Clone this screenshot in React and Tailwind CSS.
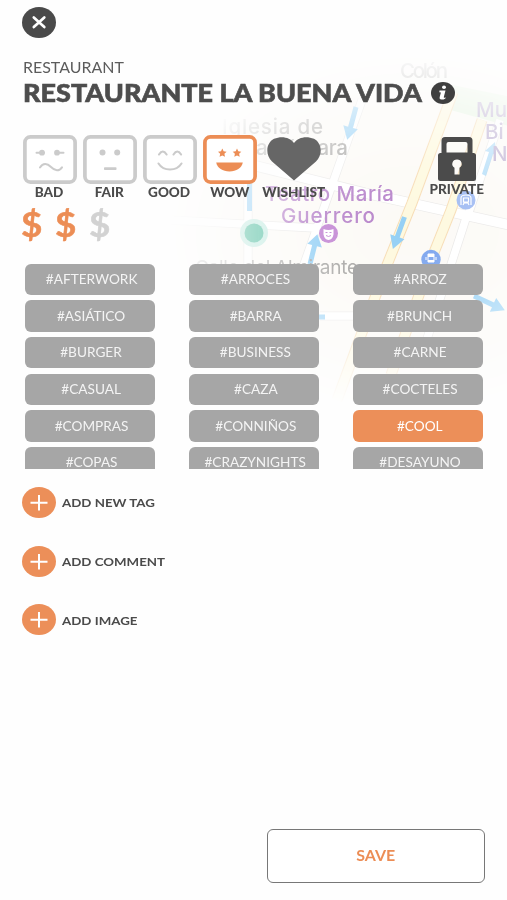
import React from "react";

const moods = [
  { label: "BAD", face: <BadFace /> },
  { label: "FAIR", face: <FairFace /> },
  { label: "GOOD", face: <GoodFace /> },
  { label: "WOW", face: <WowFace />, active: true },
];

const tags = [
  "#AFTERWORK", "#ARROCES", "#ARROZ",
  "#ASIÁTICO", "#BARRA", "#BRUNCH",
  "#BURGER", "#BUSINESS", "#CARNE",
  "#CASUAL", "#CAZA", "#COCTELES",
  "#COMPRAS", "#CONNIÑOS", "#COOL",
  "#COPAS", "#CRAZYNIGHTS", "#DESAYUNO",
];

function BadFace() {
  return (
    <g fill="none" stroke="currentColor" strokeWidth="2" strokeLinecap="round">
      <path d="M13.500 17.700H21M34 17.700h6.500M17 32.500c3-4.500 7-4.500 11-.5s8 4.500 11 0.300" />
      <circle cx="19" cy="17.700" r="1.900" fill="currentColor" />
      <circle cx="34" cy="17.700" r="1.900" fill="currentColor" />
    </g>
  );
}

function FairFace() {
  return (
    <g fill="currentColor">
      <circle cx="19.500" cy="17.500" r="3" />
      <circle cx="34.200" cy="17.500" r="3" />
      <rect x="21" y="32.200" width="12.500" height="2.800" rx="0.800" />
    </g>
  );
}

function GoodFace() {
  return (
    <g fill="none" stroke="currentColor" strokeWidth="2.100" strokeLinecap="round">
      <path d="M16 19.500q3.800-6 7.600 0M30.500 19.500q3.800-6 7.600 0M15.500 28.500c5 8 18 8 23 0" />
    </g>
  );
}

function WowFace() {
  const star = "M0-4.300l1.300 2.700 3 .4-2.200 2.100.6 3L0 2.500l-2.700 1.400.6-3-2.200-2.100 3-.4z";
  return (
    <g fill="currentColor">
      <path d={star} transform="translate(19.300 17.900)" />
      <path d={star} transform="translate(34 17.900)" />
      <path d="M13.200 27.500h26.600c-1 5.500-6.500 9-13.300 9s-12.300-3.500-13.300-9z" />
    </g>
  );
}

function Mood({ label, face, active }) {
  return (
    <div className="flex w-[54px] flex-col items-center">
      <svg viewBox="0 0 54 49" className={active ? "h-[49px] w-[54px] text-[#ec8d55]" : "h-[49px] w-[54px] text-[#cbcbcb]"}>
        <rect x="1.900" y="1.900" width="50.200" height="45.200" rx="5.500" fill="white" stroke="currentColor" strokeWidth="3.700" />
        {face}
      </svg>
      <Label>{label}</Label>
    </div>
  );
}

function Label({ children }) {
  return <span className="mr-px scale-x-110 pt-px text-[12.300px] leading-[15px] font-black whitespace-nowrap text-[#4b4b4b]">{children}</span>;
}

function AddRow({ children }) {
  return (
    <button className="flex h-[31px] items-center gap-[6px]">
      <svg viewBox="0 0 34 31" className="h-[31px] w-[34px]">
        <ellipse cx="17" cy="15.500" rx="17" ry="15.500" fill="#ec8f59" />
        <path d="M8.500 15.800h17M17 8v15.500" stroke="white" strokeWidth="2" />
      </svg>
      <span className="origin-left scale-x-110 pt-[2px] text-[12.100px] font-bold text-[#4b4b4b]">{children}</span>
    </button>
  );
}

function MapBackdrop() {
  const arrow = "M-2.500 0h5v21h5L0 34l-7.500-13h5z";
  return (
    <svg viewBox="0 0 507 480" className="pointer-events-none absolute inset-0 h-[480px] w-[507px]">
      <defs>
        <radialGradient id="fade" gradientUnits="userSpaceOnUse" cx="410" cy="232" r="245" gradientTransform="translate(0 60) scale(1 .74)">
          <stop offset="0" stopColor="white" />
          <stop offset=".35" stopColor="white" stopOpacity=".85" />
          <stop offset=".7" stopColor="white" stopOpacity=".4" />
          <stop offset="1" stopColor="white" stopOpacity="0" />
        </radialGradient>
        <mask id="mapMask">
          <rect width="507" height="480" fill="url(#fade)" />
        </mask>
      </defs>
      <g mask="url(#mapMask)">
        <rect width="507" height="480" fill="#fcfaf6" />
        <path d="M452 85l60 12v30l-65-18z" fill="#e6f5e1" />
        <g fill="none" stroke="#e9e8e7" strokeWidth="9">
          <path d="M170 220l145 8M248 170v100M362 100L302 270M320 316h45M468 212l-42 130M500 120l-32 95" />
          <path d="M240 162l125 31 145 32" strokeWidth="11" />
        </g>
        <g fill="none" stroke="white" strokeWidth="7.500">
          <path d="M170 220l145 8M248 170v100M362 100L302 270M320 316h45M468 212l-42 130M500 120l-32 95" />
          <path d="M240 162l125 31 145 32" strokeWidth="9.500" />
        </g>
        <path d="M453 92L412 203l-25 62-50 135M482 120l-31 90-18 45-42 120" fill="none" stroke="#f7dcb4" strokeWidth="11" />
        <path d="M453 92L412 203l-25 62-50 135M482 120l-31 90-18 45-42 120" fill="none" stroke="#fef9de" strokeWidth="9" />
        <g fill="#93cff5">
          <path d={arrow} transform="translate(356 107) rotate(15)" />
          <path d={arrow} transform="translate(404.500 217) rotate(20)" />
          <path d={arrow} transform="translate(310 264) rotate(194) scale(1 .9)" />
          <path d={arrow} transform="translate(474 296) rotate(-65)" />
          <path d="M482 174l7-22-4-1 10-9 1 13-3-1-7 22z" opacity=".75" />
          <path d="M247 182h5v29h-5zM319 314.500h6v5h-6z" />
        </g>
        <circle cx="254" cy="233" r="14" fill="#bfe9df" />
        <circle cx="254" cy="233" r="9.500" fill="#45b999" />
        <g fontFamily="Inter, sans-serif" fontSize="20.500" fontWeight="500" fill="#a5a4a2">
          <text x="222" y="134" textLength="101">Iglesia de</text>
          <text x="213" y="155" textLength="135">Santa Bárbara</text>
          <text x="195" y="274" textLength="163" fontSize="19" fontWeight="400">Calle del Almirante</text>
          <text x="400" y="78" textLength="48">Colón</text>
          <g fill="#b4a5cc">
            <text x="476" y="117">Mu</text>
            <text x="485" y="139">Bi</text>
            <text x="492" y="161">N</text>
          </g>
          <g fill="#b581c9">
            <text x="265" y="200.500" textLength="129">Teatro María</text>
            <text x="281" y="222.500" textLength="94">Guerrero</text>
          </g>
        </g>
        <circle cx="328.500" cy="233.500" r="9.500" fill="#c184d2" />
        <path d="M323.500 229q5 2 10 0v5.500q-1 5-5 5.500-4-.5-5-5.500z" fill="white" />
        <path d="M325.500 232.500h2M329.500 232.500h2M326 235.500q2.500 2 5 0" stroke="#c184d2" fill="none" />
        <g>
          <circle cx="466" cy="200" r="9.500" fill="#9cb8f2" />
          <path d="M461 205v-7q0-3 5-3t5 3v7M463.500 198h5v4h-5zM463 205l1-2h4l1 2" fill="none" stroke="white" strokeWidth="1.200" />
          <circle cx="431" cy="259.500" r="9.700" fill="#7ba4ee" />
          <path d="M428 254h6v8h-6zM426 257v3M436 257v3" fill="white" stroke="white" />
          <path d="M428.500 257h5v3h-5z" fill="#7ba4ee" />
        </g>
      </g>
    </svg>
  );
}

export default function App() {
  return (
    <div className="relative h-[900px] w-[507px] overflow-hidden bg-[#fefefe] font-['Lato',sans-serif]">
      <MapBackdrop />
      <main className="relative flex h-full flex-col pt-[7px] pr-[22px] pl-[22px]">
        <button aria-label="Close" className="h-[31px] w-[34px]">
          <svg viewBox="0 0 34 31" className="h-[31px] w-[34px]">
            <ellipse cx="17" cy="15.500" rx="17" ry="15.500" fill="#4a4a4a" />
            <path d="M11.800 10.500l10.500 9.500M22.300 10.500l-10.500 9.500" stroke="white" strokeWidth="2.700" strokeLinecap="round" />
          </svg>
        </button>

        <header className="mt-[20px] ml-px flex flex-col items-start">
          <span className="origin-left scale-x-110 text-[14.500px] leading-5 text-[#5c5c5c]">RESTAURANT</span>
          <div className="flex h-[30px] items-center">
            <h1 className="w-[408px] text-[24.500px] leading-[30px] font-black tracking-[0.030px] whitespace-nowrap text-[#4d4d4d] [-webkit-text-stroke:0.600px_#4d4d4d]">
              <span className="inline-block origin-left scale-x-110">RESTAURANTE LA BUENA VIDA</span>
            </h1>
            <svg viewBox="0 0 24 22" className="h-[22px] w-[24px]">
              <ellipse cx="12" cy="11" rx="12" ry="11" fill="#3f3f3f" />
              <ellipse cx="13" cy="5.300" rx="2" ry="1.700" fill="white" />
              <path d="M8.500 8.500h6l-1.700 6.500q-.2 1 .8.700l1-.5-.2 1.200q-1.800 1.200-3.800 1.200-2.500 0-1.900-2.500l1.200-4.600-1.600-.2z" fill="white" />
            </svg>
          </div>
        </header>

        <section className="mt-[27px] flex h-[65px] gap-[6.300px] pl-[0.500px]">
          {moods.map((m) => <Mood key={m.label} {...m} />)}
          <div className="flex w-[58px] flex-col items-center pl-[3px]">
            <svg viewBox="0 0 54 44" className="mt-[2px] h-[44px] w-[54px]">
              <path d="M27 43.500L5 24.500C-2 17.500-1 6 7 1.800 15-1.500 23 .5 27 6 31 .5 39-1.500 47 1.800 55 6 56 17.500 49 24.500z" fill="#666" />
            </svg>
            <div className="mt-[3px] flex flex-col"><Label>WISHLIST</Label></div>
          </div>
          <div className="ml-auto flex w-[56px] flex-col items-center">
            <svg viewBox="0 0 38 44" className="mt-[2px] h-[44px] w-[38px]">
              <path fillRule="evenodd" d="M3.500 16V3.500Q3.500 0 7 0h24q3.500 0 3.500 3.500V16h1q2.500 0 2.500 2.500V41.500q0 2.500-2.500 2.500h-33Q0 44 0 41.500v-23Q0 16 2.500 16zM8.500 15.500h21V7q0-2-2-2h-17q-2 0-2 2zM19 22.500a4.800 4.500 0 0 0-2.500 8.300V37.500h5V30.800A4.800 4.500 0 0 0 19 22.500z" fill="#4b4b4b" />
            </svg>
            <Label>PRIVATE</Label>
          </div>
        </section>

        <div className="mt-[4px] flex h-[40px] text-[33.500px] leading-[40px] font-bold text-[#ec8d55] [-webkit-text-stroke:0.500px]">
          <span className="w-[34px] origin-[10px_50%] scale-x-110">$</span>
          <span className="w-[33.500px] origin-[10px_50%] scale-x-110">$</span>
          <span className="w-[34px] origin-[10px_50%] scale-x-110 text-[#d2d2d2]">$</span>
        </div>

        <section className="mt-[19.500px] ml-[3px] grid h-[205px] w-[458px] shrink-0 grid-cols-3 content-start gap-x-[34.500px] gap-y-[5.200px] overflow-hidden">
          {tags.map((t) => (
            <button key={t} className={t === "#COOL" ? "h-[31.500px] rounded-md bg-[#ec8f59] pt-[2px] pl-[3px] text-[12.400px] text-white" : "h-[31.500px] rounded-md bg-[#a6a6a6] pt-[2px] pl-[3px] text-[12.400px] text-[#f4f4f4]"}>
              <span className="inline-block scale-x-110">{t}</span>
            </button>
          ))}
        </section>

        <section className="mt-[18.500px] flex flex-col gap-[27.700px]">
          <AddRow>ADD NEW TAG</AddRow>
          <AddRow>ADD COMMENT</AddRow>
          <AddRow>ADD IMAGE</AddRow>
        </section>

        <button className="mt-auto mb-[17.500px] h-[54px] w-[218.500px] self-end rounded-md border-[1.500px] border-[#777] bg-white text-[14.500px] font-bold text-[#ec8d55]">
          <span className="inline-block scale-x-110">SAVE</span>
        </button>
      </main>
    </div>
  );
}
